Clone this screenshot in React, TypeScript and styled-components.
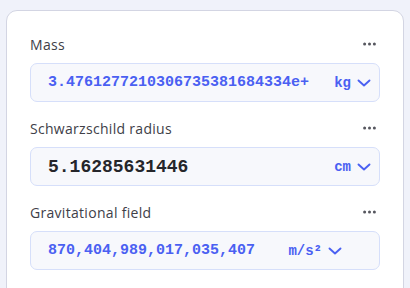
import React from 'react';
import styled, { createGlobalStyle } from 'styled-components';

const GlobalStyle = createGlobalStyle`
  html, body {
    margin: 0;
    padding: 0;
    background: #f0f2fa;
    overflow: hidden;
  }
`;

const Page = styled.div`
  width: 410px;
  height: 288px;
  padding: 10px 6px 0 6px;
  box-sizing: border-box;
  overflow: hidden;
`;

const Card = styled.div`
  background: #ffffff;
  border: 1px solid #d3d5e3;
  border-radius: 11px;
  padding: 23px 23px 40px 23px;
  display: flex;
  flex-direction: column;
  gap: 16px;
`;

const Field = styled.div`
  display: flex;
  flex-direction: column;
  gap: 9px;
`;

const LabelRow = styled.div`
  height: 20px;
  display: flex;
  align-items: center;
  justify-content: space-between;
`;

const Label = styled.span`
  font-family: 'Open Sans', 'Noto Sans', sans-serif;
  font-size: 14px;
  letter-spacing: 0.3px;
  color: #404048;
`;

const MoreButton = styled.button`
  border: 0;
  background: none;
  padding: 0;
  margin-right: 4px;
  display: flex;
  align-items: center;
  color: #55565e;
`;

const InputBox = styled.div<{ $padRight: number }>`
  height: 39px;
  box-sizing: border-box;
  background: #f7f8fc;
  border: 1px solid #d6dffa;
  border-radius: 7px;
  display: flex;
  align-items: center;
  padding: 0 ${(p) => p.$padRight}px 0 17px;
`;

const Value = styled.span<{ $big?: boolean }>`
  flex: 1;
  font-family: 'Liberation Mono', 'Courier New', monospace;
  font-weight: 700;
  font-size: ${(p) => (p.$big ? '18px' : '15px')};
  color: ${(p) => (p.$big ? '#25262b' : '#4a60f2')};
  white-space: nowrap;
  overflow: hidden;
`;

const UnitSelect = styled.div`
  display: flex;
  align-items: center;
  gap: 6px;
  font-family: 'Liberation Mono', 'Courier New', monospace;
  font-weight: 700;
  font-size: 14px;
  color: #4a60f2;
`;

const Dots = () => (
  <svg width="13" height="4" viewBox="0 0 13 4">
    <circle cx="1.6" cy="2" r="1.5" fill="currentColor" />
    <circle cx="6.5" cy="2" r="1.5" fill="currentColor" />
    <circle cx="11.4" cy="2" r="1.5" fill="currentColor" />
  </svg>
);

const Chevron = () => (
  <svg width="14" height="8" viewBox="0 0 14 8" fill="none">
    <path d="M1.5 1.5 L7 6.5 L12.5 1.5" stroke="#4a60f2" strokeWidth="1.9" strokeLinecap="round" strokeLinejoin="round" />
  </svg>
);

interface FieldProps {
  label: string;
  value: string;
  unit: React.ReactNode;
  big?: boolean;
  padRight?: number;
}

const Quantity: React.FC<FieldProps> = ({ label, value, unit, big, padRight = 8 }) => (
  <Field>
    <LabelRow>
      <Label>{label}</Label>
      <MoreButton>
        <Dots />
      </MoreButton>
    </LabelRow>
    <InputBox $padRight={padRight}>
      <Value $big={big}>{value}</Value>
      <UnitSelect>
        <span>{unit}</span>
        <Chevron />
      </UnitSelect>
    </InputBox>
  </Field>
);

export default function App() {
  return (
    <>
      <GlobalStyle />
      <Page>
        <Card>
          <Quantity label="Mass" value="3.4761277210306735381684334e+" unit="kg" />
          <Quantity label="Schwarzschild radius" value="5.16285631446" unit="cm" big />
          <Quantity label="Gravitational field" value="870,404,989,017,035,407" unit="m/s²" padRight={37} />
        </Card>
      </Page>
    </>
  );
}
